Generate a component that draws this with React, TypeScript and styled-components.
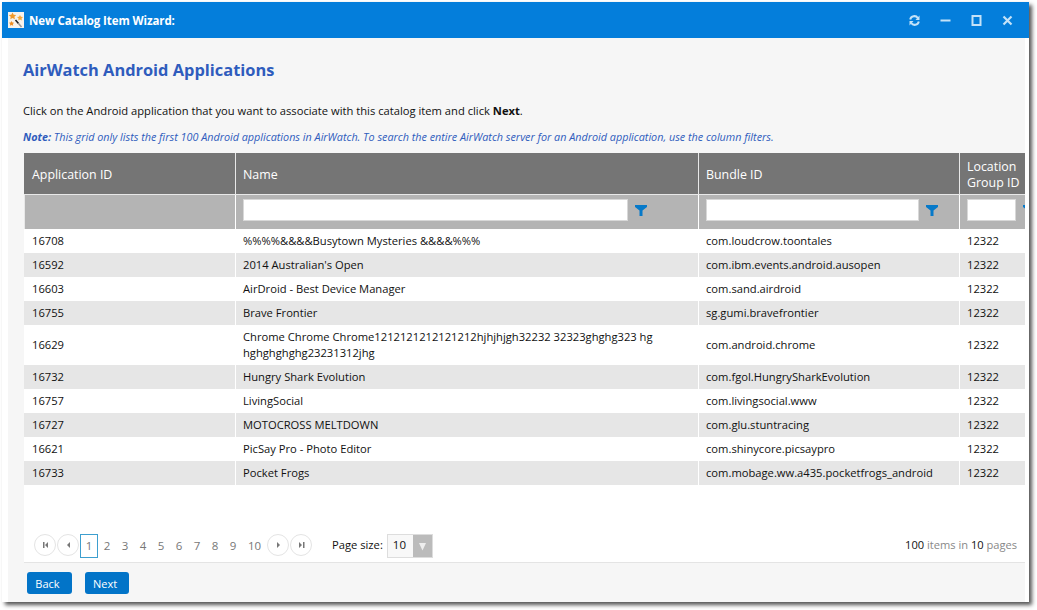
import styled, { createGlobalStyle } from 'styled-components'

const GlobalStyle = createGlobalStyle`
  html, body { margin: 0; padding: 0; background: #fff; }
  body { font-family: "Open Sans", "Noto Sans", "Liberation Sans", sans-serif; font-size: 11.5px; color: #111; }
`

const Page = styled.div`
  width: 1037px;
  height: 610px;
  padding: 2px 0 0 2px;
  box-sizing: border-box;
  overflow: hidden;
`

const Window = styled.div`
  width: 1027px;
  height: 600px;
  display: flex;
  flex-direction: column;
  background: #fff;
  box-shadow: 3px 3px 4px #555;
`

const TitleBar = styled.div`
  height: 36px;
  flex: none;
  background: #047edb;
  display: flex;
  align-items: center;
  padding: 0 16px 0 6px;
  color: #fff;
`

const TitleText = styled.div`
  font-weight: 700;
  font-size: 11.5px;
  margin-left: 5px;
  flex: 1;
  letter-spacing: -0.1px;
`

const WinButtons = styled.div`
  display: flex;
  align-items: center;
  gap: 20px;
`

const Content = styled.div`
  flex: 1;
  margin: 0 4px 0 6px;
  background: #f6f6f6;
  padding: 0 0 0 15px;
  display: flex;
  flex-direction: column;
  min-height: 0;
`

const Heading = styled.h1`
  margin: 22px 0 0 0;
  height: 20px;
  font-size: 16.4px;
  line-height: 20px;
  font-weight: 700;
  color: #2f5cbd;
`

const Intro = styled.p`
  margin: 23px 0 0 0;
  height: 16px;
  line-height: 16px;
  font-size: 11.2px;
`

const Note = styled.p`
  margin: 10px 0 0 0;
  height: 16px;
  line-height: 16px;
  font-size: 10.8px;
  font-style: italic;
  color: #2f5cbd;
`

const GridPanel = styled.div`
  margin: 8px 0 0 1px;
  width: 1001px;
  height: 409px;
  flex: none;
  background: #fff;
  border-bottom: 1px solid #e4e4e4;
  display: flex;
  flex-direction: column;
  overflow: hidden;
`

const TableClip = styled.div`
  height: 374px;
  flex: none;
  overflow: hidden;
`

const Table = styled.table`
  border-collapse: separate;
  border-spacing: 0;
  table-layout: fixed;
  width: 1046px;
`

const HeadCell = styled.th`
  height: 42px;
  box-sizing: border-box;
  background: #757575;
  color: #fff;
  font-weight: 400;
  text-align: left;
  padding: 2px 7px 0;
  line-height: 16px;
  font-size: 12.4px;
  border-right: 1px solid #e8e8e8;
  border-bottom: 1px solid #e8e8e8;
  &:first-child { padding-left: 8px; }
`

const FilterCell = styled.td`
  height: 34px;
  box-sizing: border-box;
  background: #b4b4b4;
  padding: 0 7px 4px;
  border-right: 1px solid #fff;
  &:first-child { border-left: 1px solid #e8e8e8; }
`

const FilterWrap = styled.div`
  display: flex;
  align-items: center;
  gap: 7px;
`

const FilterInput = styled.input<{ $width: number }>`
  flex: none;
  width: ${p => p.$width}px;
  height: 22px;
  box-sizing: border-box;
  border: 1px solid #d8d8d8;
  background: #fff;
  padding: 0;
  outline: none;
`

const Row = styled.tr<{ $alt: boolean }>`
  background: ${p => (p.$alt ? '#e6e6e6' : '#fff')};
`

const Cell = styled.td`
  height: 24px;
  box-sizing: border-box;
  padding: 4px 7px;
  font-size: 11.2px;
  line-height: 16px;
  color: #111;
  border-right: 1px solid #fff;
  &:first-child { padding-left: 8px; }
`

const Pager = styled.div`
  flex: 1;
  display: flex;
  align-items: flex-start;
  padding: 7px 8px 0 10px;
`

const Circle = styled.button`
  width: 22px;
  height: 22px;
  box-sizing: border-box;
  border-radius: 50%;
  border: 1px solid #e4e4e4;
  background: #fff;
  padding: 0;
  margin-right: 1px;
  display: flex;
  align-items: center;
  justify-content: center;
`

const PageNum = styled.span<{ $current?: boolean; $wide?: boolean }>`
  width: ${p => (p.$wide ? '25px' : '18px')};
  height: 24px;
  box-sizing: border-box;
  display: flex;
  align-items: center;
  justify-content: center;
  padding-bottom: 1px;
  color: #777;
  font-size: 11.5px;
  border: ${p => (p.$current ? '1px solid #3d9fcf' : '0')};
`

const SizeLabel = styled.span`
  margin-left: 19px;
  font-size: 11.2px;
  line-height: 22px;
`

const SizeSelect = styled.div`
  margin-left: 4px;
  width: 46px;
  height: 24px;
  display: flex;
  box-sizing: border-box;
  border: 1px solid #ddd;
  background: #f8f8f8;
`

const SizeValue = styled.span`
  flex: 1;
  padding-left: 5px;
  line-height: 20px;
  font-size: 11.5px;
`

const SizeArrow = styled.span`
  width: 19px;
  background: #bbb;
  display: flex;
  align-items: center;
  justify-content: center;
`

const Summary = styled.div`
  margin-left: auto;
  color: #888;
  font-size: 11.1px;
  line-height: 22px;
  b { font-weight: 400; color: #111; }
`

const Footer = styled.div`
  display: flex;
  gap: 13px;
  margin: 9px 0 0 4px;
`

const PrimaryButton = styled.button`
  height: 22px;
  padding: 0 4px 0 0;
  border: 0;
  border-radius: 3px;
  background: #0274c8;
  color: #fff;
  font-family: inherit;
  font-size: 11px;
`

const BackButton = styled(PrimaryButton)`
  width: 45px;
`

const NextButton = styled(PrimaryButton)`
  width: 44px;
`

const apps = [
  ['16708', '%%%%&&&&Busytown Mysteries &&&&%%%', 'com.loudcrow.toontales'],
  ['16592', "2014 Australian's Open", 'com.ibm.events.android.ausopen'],
  ['16603', 'AirDroid - Best Device Manager', 'com.sand.airdroid'],
  ['16755', 'Brave Frontier', 'sg.gumi.bravefrontier'],
  ['16629', 'Chrome Chrome Chrome1212121212121212hjhjhjgh32232 32323ghghg323 hg hghghghghg23231312jhg', 'com.android.chrome'],
  ['16732', 'Hungry Shark Evolution', 'com.fgol.HungrySharkEvolution'],
  ['16757', 'LivingSocial', 'com.livingsocial.www'],
  ['16727', 'MOTOCROSS MELTDOWN', 'com.glu.stuntracing'],
  ['16621', 'PicSay Pro - Photo Editor', 'com.shinycore.picsaypro'],
  ['16733', 'Pocket Frogs', 'com.mobage.ww.a435.pocketfrogs_android'],
]

const Funnel = () => (
  <svg width="12" height="11" viewBox="0 0 12 11" style={{ flex: 'none' }}>
    <path d="M0 0h12v2L7.500 5.500V11h-3V5.500L0 2z" fill="#0679c9" />
  </svg>
)

const WandIcon = () => (
  <svg width="16" height="16" viewBox="0 0 16 16">
    <rect width="16" height="16" fill="#f6f3ec" />
    <path d="M7.500 8l3 3.500" stroke="#222" strokeWidth="1.6" />
    <path d="M10.500 11.500l3 3.500" stroke="#999" strokeWidth="1.6" />
    <path d="M4.500 0.500l1.200 2.300 2.500.3-1.800 1.700.5 2.500-2.400-1.200-2.200 1.200.4-2.500L.7 3.100l2.600-.3z" fill="#f09a2a" />
    <path d="M12 3l1 1.800 2 .3-1.500 1.400.4 2-1.900-1-1.800 1 .4-2L9 5.100l2-.3z" fill="#f5a93a" />
    <path d="M3.500 9l.9 1.600 1.800.2-1.300 1.200.3 1.800-1.700-.9-1.600.9.3-1.800L.9 10.800l1.800-.2z" fill="#ee8e22" />
  </svg>
)

const PagerIcon = ({ kind }: { kind: 'first' | 'prev' | 'next' | 'last' }) => {
  const d = {
    first: 'M2 1h1.500v6H2zM7 1v6L4 4z',
    prev: 'M6 1v6L3 4z',
    next: 'M3 1v6l3-3z',
    last: 'M6 1h1.500v6H6zM2 1v6l3-3z',
  }[kind]
  return (
    <svg width="9" height="8" viewBox="0 0 9 8">
      <path d={d} fill="#777" />
    </svg>
  )
}

const App = () => (
  <>
    <GlobalStyle />
    <Page>
      <Window>
        <TitleBar>
          <WandIcon />
          <TitleText>New Catalog Item Wizard:</TitleText>
          <WinButtons>
            <svg width="11" height="11" viewBox="0 0 11 11" fill="none" stroke="#c4e2f8" strokeWidth="2">
              <path d="M1.200 4.500A4.200 4.200 0 0 1 8.800 3" />
              <path d="M9.800 6.500A4.200 4.200 0 0 1 2.200 8" />
              <path d="M10.500 0.500v4.500h-4z" fill="#c4e2f8" stroke="none" />
              <path d="M0.500 10.500v-4.500h4z" fill="#c4e2f8" stroke="none" />
            </svg>
            <svg width="11" height="11" viewBox="0 0 11 11">
              <rect x="0.500" y="4.500" width="10" height="2" fill="#c4e2f8" />
            </svg>
            <svg width="11" height="11" viewBox="0 0 11 11" fill="none" stroke="#c4e2f8" strokeWidth="2">
              <rect x="1.500" y="1" width="8" height="9" />
            </svg>
            <svg width="11" height="11" viewBox="0 0 11 11" fill="none" stroke="#c4e2f8" strokeWidth="2.200">
              <path d="M1.500 1.500l8 8M9.500 1.500l-8 8" />
            </svg>
          </WinButtons>
        </TitleBar>
        <Content>
          <Heading>AirWatch Android Applications</Heading>
          <Intro>
            Click on the Android application that you want to associate with this catalog item and click <b>Next</b>.
          </Intro>
          <Note>
            <b>Note:</b> This grid only lists the first 100 Android applications in AirWatch. To search the entire AirWatch server for an Android application, use the column filters.
          </Note>
          <GridPanel>
            <TableClip>
              <Table>
                <colgroup>
                  <col style={{ width: 212 }} />
                  <col style={{ width: 463 }} />
                  <col style={{ width: 261 }} />
                  <col style={{ width: 110 }} />
                </colgroup>
                <thead>
                  <tr>
                    <HeadCell>Application ID</HeadCell>
                    <HeadCell>Name</HeadCell>
                    <HeadCell>Bundle ID</HeadCell>
                    <HeadCell>Location<br />Group ID</HeadCell>
                  </tr>
                  <tr>
                    <FilterCell />
                    <FilterCell>
                      <FilterWrap><FilterInput $width={385} /><Funnel /></FilterWrap>
                    </FilterCell>
                    <FilterCell>
                      <FilterWrap><FilterInput $width={213} /><Funnel /></FilterWrap>
                    </FilterCell>
                    <FilterCell>
                      <FilterWrap><FilterInput $width={49} /><Funnel /></FilterWrap>
                    </FilterCell>
                  </tr>
                </thead>
                <tbody>
                  {apps.map((a, i) => (
                    <Row key={a[0]} $alt={i % 2 === 1}>
                      <Cell>{a[0]}</Cell>
                      <Cell>{a[1]}</Cell>
                      <Cell>{a[2]}</Cell>
                      <Cell>12322</Cell>
                    </Row>
                  ))}
                </tbody>
              </Table>
            </TableClip>
            <Pager>
              <Circle><PagerIcon kind="first" /></Circle>
              <Circle><PagerIcon kind="prev" /></Circle>
              <PageNum $current>1</PageNum>
              {['2', '3', '4', '5', '6', '7', '8', '9'].map(n => (
                <PageNum key={n}>{n}</PageNum>
              ))}
              <PageNum $wide>10</PageNum>
              <Circle><PagerIcon kind="next" /></Circle>
              <Circle><PagerIcon kind="last" /></Circle>
              <SizeLabel>Page size:</SizeLabel>
              <SizeSelect>
                <SizeValue>10</SizeValue>
                <SizeArrow>
                  <svg width="9" height="9" viewBox="0 0 9 9"><path d="M1 1h7L4.500 8.500z" fill="#eee" /></svg>
                </SizeArrow>
              </SizeSelect>
              <Summary><b>100</b> items in <b>10</b> pages</Summary>
            </Pager>
          </GridPanel>
          <Footer>
            <BackButton>Back</BackButton>
            <NextButton>Next</NextButton>
          </Footer>
        </Content>
      </Window>
    </Page>
  </>
)

export default App
